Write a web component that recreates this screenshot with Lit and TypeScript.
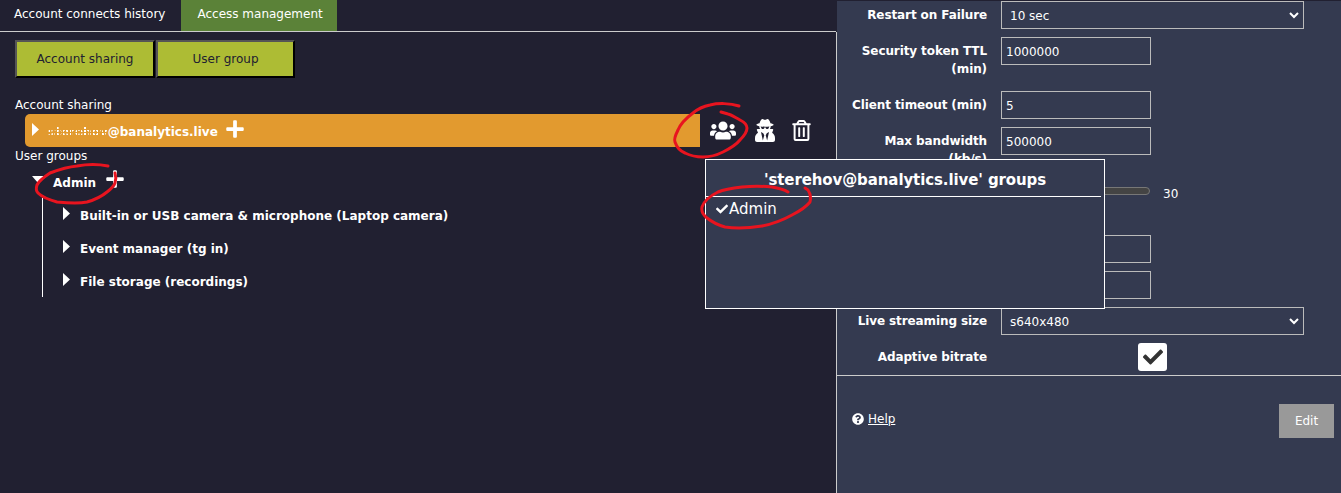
import { LitElement, html, css, svg } from 'lit';
import { customElement } from 'lit/decorators.js';

const ICONS = {
  users:
    'M96 224c35.3 0 64-28.7 64-64s-28.7-64-64-64-64 28.7-64 64 28.7 64 64 64zm448 0c35.3 0 64-28.7 64-64s-28.7-64-64-64-64 28.7-64 64 28.7 64 64 64zm32 32h-64c-17.6 0-33.5 7.1-45.1 18.6 40.3 22.1 68.9 62 75.1 109.4h66c17.7 0 32-14.3 32-32v-32c0-35.3-28.7-64-64-64zm-256 0c61.9 0 112-50.1 112-112S381.9 32 320 32 208 82.1 208 144s50.1 112 112 112zm76.8 32h-8.3c-20.8 10-43.9 16-68.5 16s-47.6-6-68.5-16h-8.3C179.6 288 128 339.6 128 403.2V432c0 26.5 21.5 48 48 48h288c26.5 0 48-21.5 48-48v-28.8c0-63.6-51.6-115.2-115.2-115.2zm-223.7-13.4C161.5 263.1 145.6 256 128 256H64c-35.3 0-64 28.7-64 64v32c0 17.7 14.3 32 32 32h65.9c6.3-47.4 34.9-87.3 75.2-109.4z',
  secret:
    'M383.9 308.3l23.9-62.6c4-10.5-3.7-21.7-15-21.7h-58.5c11-18.9 17.8-40.6 17.8-64v-.3c39.2-7.8 64-19.1 64-31.7 0-13.3-27.3-25.1-70.1-33-9.2-32.8-27-65.8-40.6-82.8-9.5-11.9-25.9-15.6-39.5-8.8l-27.6 13.8c-9 4.5-19.6 4.5-28.6 0L182.1 3.4c-13.6-6.8-30-3.1-39.5 8.8-13.5 17-31.4 50-40.6 82.8-42.7 7.9-70 19.7-70 33 0 12.6 24.8 23.9 64 31.7v.3c0 23.4 6.8 45.1 17.8 64H56.3c-11.5 0-19.2 11.7-14.7 22.3l25.8 60.2C27.3 329.8 0 372.7 0 422.4v44.8C0 491.9 20.1 512 44.8 512h358.4c24.7 0 44.8-20.1 44.8-44.8v-44.8c0-48.4-25.8-90.4-64.1-114.1zM176 480l-41.6-192 49.6 32 24 40-32 120zm96 0l-32-120 24-40 49.6-32L272 480zm41.7-298.5c-3.9 11.9-7 24.6-16.5 33.4-10.1 9.3-48 22.4-64-25-2.8-8.4-15.4-8.4-18.3 0-17 50.2-56 32.4-64 25-9.5-8.8-12.7-21.5-16.5-33.4-.8-2.5-6.3-5.7-6.3-5.8v-10.8c28.3 3.6 61 5.8 96 5.8s67.7-2.2 96-5.8v10.8c-.1.1-5.6 3.2-6.4 5.8z',
  trash:
    'M268 416h24a12 12 0 0 0 12-12V188a12 12 0 0 0-12-12h-24a12 12 0 0 0-12 12v216a12 12 0 0 0 12 12zM432 80h-82.41l-34-56.7A48 48 0 0 0 274.41 0H173.59a48 48 0 0 0-41.16 23.3L98.41 80H16A16 16 0 0 0 0 96v16a16 16 0 0 0 16 16h16v336a48 48 0 0 0 48 48h288a48 48 0 0 0 48-48V128h16a16 16 0 0 0 16-16V96a16 16 0 0 0-16-16zM171.84 50.91A6 6 0 0 1 177 48h94a6 6 0 0 1 5.15 2.91L293.61 80H154.39zM368 464H80V128h288zm-212-48h24a12 12 0 0 0 12-12V188a12 12 0 0 0-12-12h-24a12 12 0 0 0-12 12v216a12 12 0 0 0 12 12z',
  plus:
    'M416 208H272V64c0-17.67-14.33-32-32-32h-32c-17.67 0-32 14.33-32 32v144H32c-17.67 0-32 14.33-32 32v32c0 17.67 14.33 32 32 32h144v144c0 17.67 14.33 32 32 32h32c17.67 0 32-14.33 32-32V304h144c17.67 0 32-14.33 32-32v-32c0-17.67-14.33-32-32-32z',
  check:
    'M173.898 439.404l-166.4-166.4c-9.997-9.997-9.997-26.206 0-36.204l36.203-36.204c9.997-9.998 26.207-9.998 36.204 0L192 312.69 432.095 72.596c9.997-9.997 26.207-9.997 36.204 0l36.203 36.204c9.997 9.997 9.997 26.206 0 36.204l-294.4 294.401c-9.998 9.997-26.207 9.997-36.204-.001z',
  help:
    'M504 256c0 136.997-111.043 248-248 248S8 392.997 8 256C8 119.083 119.043 8 256 8s248 111.083 248 248zM262.655 90c-54.497 0-89.255 22.957-116.549 63.758-3.536 5.286-2.353 12.415 2.715 16.258l34.699 26.31c5.205 3.947 12.621 3.008 16.665-2.122 17.864-22.658 30.113-35.797 57.303-35.797 20.429 0 45.698 13.148 45.698 32.958 0 14.976-12.363 22.667-32.534 33.976C247.128 238.528 216 254.941 216 296v4c0 6.627 5.373 12 12 12h56c6.627 0 12-5.373 12-12v-1.333c0-28.462 83.186-29.647 83.186-106.667 0-58.002-60.165-102-116.531-102zM256 338c-25.365 0-46 20.635-46 46 0 25.364 20.635 46 46 46s46-20.635 46-46c0-25.365-20.635-46-46-46z',
};

const icon = (d: string, w: number, h: number, vw: number, cls = '') =>
  html`<svg class="icon ${cls}" width=${w} height=${h} viewBox="0 0 ${vw} 512" fill="currentColor">${svg`<path d=${d}></path>`}</svg>`;

const arrowRight = html`<svg class="arrow" width="7" height="13" viewBox="0 0 7 13" fill="#fff"><path d="M0 0l7 6.5L0 13z"></path></svg>`;
const arrowDown = html`<svg class="arrow" width="12" height="7" viewBox="0 0 12 7" fill="#fff"><path d="M0 0h12L6 7z"></path></svg>`;
const chevron = html`<svg class="chevron" width="10" height="7" viewBox="0 0 10 7" fill="none" stroke="#fff" stroke-width="2"><path d="M1 1l4 4 4-4"></path></svg>`;

const DEVICES = [
  'Built-in or USB camera & microphone (Laptop camera)',
  'Event manager (tg in)',
  'File storage (recordings)',
];

@customElement('app-root')
export class AppRoot extends LitElement {
  static styles = css`
    :host {
      display: flex;
      position: relative;
      width: 1341px;
      height: 493px;
      overflow: hidden;
      background: #212031;
      color: #fff;
      font: 12px/18px 'DejaVu Sans', sans-serif;
    }

    .icon {
      display: block;
      flex: none;
    }

    /* left side */
    .main {
      width: 836px;
      flex: none;
    }

    .tabs {
      display: flex;
      height: 31px;
      border-bottom: 1px solid #ccc;
    }

    .tab {
      padding: 5px 15px 0 14px;
      line-height: 18px;
    }

    .tab.active {
      margin-left: 1px;
      padding: 5px 14px 0 16px;
      background: #5b8238;
    }

    .actions {
      display: flex;
      gap: 1px;
      margin: 8px 0 0 15px;
    }

    .action {
      width: 140px;
      height: 38px;
      box-sizing: border-box;
      border: 2px solid;
      border-color: #555 #000 #000 #555;
      background: #adbc34;
      color: #212031;
      font: inherit;
      padding: 0;
    }

    .action + .action {
      width: 139px;
    }

    .section {
      margin: 18px 0 0 15px;
      height: 18px;
    }

    .share-row {
      display: flex;
      align-items: center;
      height: 33px;
      margin-left: 25px;
    }

    .share {
      display: flex;
      align-items: center;
      width: 675px;
      height: 33px;
      box-sizing: border-box;
      padding-left: 7px;
      background: #e29a2f;
      border-radius: 5px 0 0 5px;
      font-weight: bold;
    }

    .share .arrow {
      margin: -3px 9px 0 0;
    }

    .share span {
      margin-top: 2px;
    }

    /* the address is scrambled in the reference, only specks remain */
    .masked {
      mask-image: repeating-linear-gradient(90deg, #000 0 2px, transparent 2px 3px),
        repeating-linear-gradient(0deg, #000 0 2px, transparent 2px 3px);
      mask-composite: intersect;
    }

    .share .icon {
      margin: -4px 0 0 8px;
    }

    .share-tools {
      display: flex;
      align-items: center;
      margin-top: -1px;
      padding-left: 10px;
    }

    .share-tools .secret {
      margin-left: 19px;
    }

    .share-tools .trash {
      margin-left: 17px;
    }

    .section.groups {
      margin-top: 0;
      height: 17px;
      padding-top: 1px;
      box-sizing: border-box;
      line-height: 16px;
    }

    .group {
      display: flex;
      align-items: center;
      height: 27px;
      margin: 5px 0 0 32px;
      font-weight: bold;
    }

    .group .arrow {
      margin: -6px 9px 0 0;
    }

    .group .icon {
      margin: -7px 0 0 10px;
    }

    .devices {
      margin: 2px 0 0 42px;
      height: 99px;
      border-left: 1px solid #fff;
      padding-top: 1px;
      box-sizing: border-box;
    }

    .device {
      display: flex;
      align-items: center;
      height: 33px;
      padding-left: 20px;
      font-weight: bold;
    }

    .device .arrow {
      margin: -5px 10px 0 0;
    }

    /* right side */
    .settings {
      flex: 1;
      box-sizing: border-box;
      padding-top: 1px;
      background: #343a50;
      border-left: 1px solid #ccc;
      margin-top: 32px;
    }

    .settings-inner {
      margin-top: -32px;
      background: #343a50;
    }

    .form {
      display: grid;
      grid-template-columns: 150px 303px;
      column-gap: 14px;
      row-gap: 8px;
      padding-bottom: 4px;
      border-bottom: 1px solid #ccc;
    }

    .label {
      padding-top: 5px;
      text-align: right;
      font-weight: bold;
      letter-spacing: -0.1px;
    }

    .control {
      min-height: 28px;
    }

    .control.tall {
      min-height: 46px;
    }

    input[type='text'],
    select {
      display: block;
      box-sizing: border-box;
      height: 28px;
      border: 1px solid #bbb;
      background: transparent;
      color: #fff;
      font: inherit;
      padding: 2px 4px 0;
      border-radius: 0;
      outline: none;
    }

    input[type='text'] {
      width: 150px;
    }

    .select {
      position: relative;
      width: 303px;
    }

    select {
      width: 100%;
      padding-left: 8px;
      appearance: none;
    }

    .chevron {
      position: absolute;
      right: 5px;
      top: 11px;
    }

    .slider {
      display: flex;
      align-items: flex-start;
      gap: 13px;
      box-sizing: border-box;
      padding-top: 4px;
    }

    .track {
      width: 147px;
      height: 6px;
      margin-top: 2px;
      background: #444;
      border: 1px solid #777;
      border-radius: 5px;
    }

    .check-wrap {
      display: flex;
      justify-content: center;
    }

    .checkbox {
      display: flex;
      align-items: center;
      justify-content: center;
      width: 29px;
      height: 28px;
      background: #fff;
      border-radius: 3px;
      color: #333;
    }

    .footer {
      display: flex;
      justify-content: space-between;
      align-items: flex-start;
      padding: 28px 7px 0 15px;
    }

    .help {
      display: flex;
      align-items: center;
      gap: 4px;
      margin-top: 6px;
      color: #fff;
      text-decoration: underline;
    }

    .edit {
      width: 55px;
      height: 34px;
      border: 0;
      background: #999;
      color: #fff;
      font: inherit;
    }

    /* popup over the settings */
    .popup {
      position: absolute;
      left: 705px;
      top: 159px;
      width: 400px;
      height: 150px;
      box-sizing: border-box;
      border: 1px solid #fff;
      background: #343a50;
    }

    .popup h3 {
      margin: 0;
      height: 36px;
      line-height: 41px;
      text-align: center;
      font-size: 15px;
      letter-spacing: -0.1px;
    }

    .rule {
      height: 1px;
      margin-right: 3px;
      background: #fff;
    }

    .popup-item {
      display: flex;
      align-items: center;
      gap: 1px;
      margin: 3px 0 0 10px;
      font-size: 15px;
    }

    .scribbles {
      position: absolute;
      inset: 0;
      pointer-events: none;
    }
  `;

  render() {
    return html`
      <div class="main">
        <div class="tabs">
          <div class="tab">Account connects history</div>
          <div class="tab active">Access management</div>
        </div>
        <div class="actions">
          <button class="action">Account sharing</button>
          <button class="action">User group</button>
        </div>
        <div class="section">Account sharing</div>
        <div class="share-row">
          <div class="share">
            ${arrowRight}
            <span class="masked">sterehov</span><span>@banalytics.live</span>
            ${icon(ICONS.plus, 18, 20, 448)}
          </div>
          <div class="share-tools">
            ${icon(ICONS.users, 26, 21, 640)} ${icon(ICONS.secret, 20, 23, 448, 'secret')}
            ${icon(ICONS.trash, 19, 21, 448, 'trash')}
          </div>
        </div>
        <div class="section groups">User groups</div>
        <div class="group">${arrowDown}<span>Admin</span>${icon(ICONS.plus, 18, 20, 448)}</div>
        <div class="devices">
          ${DEVICES.map((d) => html`<div class="device">${arrowRight}<span>${d}</span></div>`)}
        </div>
      </div>

      <div class="settings">
        <div class="settings-inner">
          <div class="form">
            <div class="label">Restart on Failure</div>
            <div class="control select"><select><option>10 sec</option></select>${chevron}</div>
            <div class="label">Security token TTL (min)</div>
            <div class="control tall"><input type="text" value="1000000" /></div>
            <div class="label">Client timeout (min)</div>
            <div class="control"><input type="text" value="5" /></div>
            <div class="label">Max bandwidth<br />(kb/s)</div>
            <div class="control tall"><input type="text" value="500000" /></div>
            <div class="label"></div>
            <div class="control tall slider"><div class="track"></div><span>30</span></div>
            <div class="label"></div>
            <div class="control"><input type="text" /></div>
            <div class="label"></div>
            <div class="control"><input type="text" /></div>
            <div class="label">Live streaming size</div>
            <div class="control select"><select><option>s640x480</option></select>${chevron}</div>
            <div class="label">Adaptive bitrate</div>
            <div class="control check-wrap">
              <div class="checkbox">${icon(ICONS.check, 20, 20, 512)}</div>
            </div>
          </div>
          <div class="footer">
            <a class="help">${icon(ICONS.help, 12, 12, 512)}Help</a>
            <button class="edit">Edit</button>
          </div>
        </div>
      </div>

      <div class="popup">
        <h3>'sterehov@banalytics.live' groups</h3>
        <div class="rule"></div>
        <div class="popup-item">${icon(ICONS.check, 12, 12, 512)}<span>Admin</span></div>
      </div>

      <svg class="scribbles" width="1341" height="493" fill="none" stroke="#e8141f" stroke-width="3" stroke-linecap="round" stroke-linejoin="round">
        <path d="M739 106C730 103 718 103 710 105C700 107 693 113 693 113C685 119 680 125 678 130C675 136 674 140 675 142C677 148 680 151 685 153C691 156 697 157 703 157C711 157 717 155 723 152C731 148 736 145 740 140C744 136 747 132 747 128C747 125 744 122 740 120C736 118 732 115 728 114L721 112"></path>
        <path d="M108 166C98 164 88 164 77 166C67 167 58 170 50 173C44 177 39 181 37 185C36 188 36 191 38 193C43 198 50 200 57 202C67 203 78 204 87 202C94 200 101 197 107 192C111 189 114 186 115 183C116 180 116 176 115 173"></path>
        <path d="M788 192C783 189 778 188 772 187C762 186 752 186 742 187C733 188 725 189 718 192C710 196 704 201 702 207C701 212 703 215 707 218C712 222 718 225 725 227C737 229 750 228 762 226C773 224 783 220 792 215C800 211 806 207 810 202C811 198 810 193 808 190L805 188"></path>
      </svg>
    `;
  }
}

declare global {
  interface HTMLElementTagNameMap {
    'app-root': AppRoot;
  }
}
